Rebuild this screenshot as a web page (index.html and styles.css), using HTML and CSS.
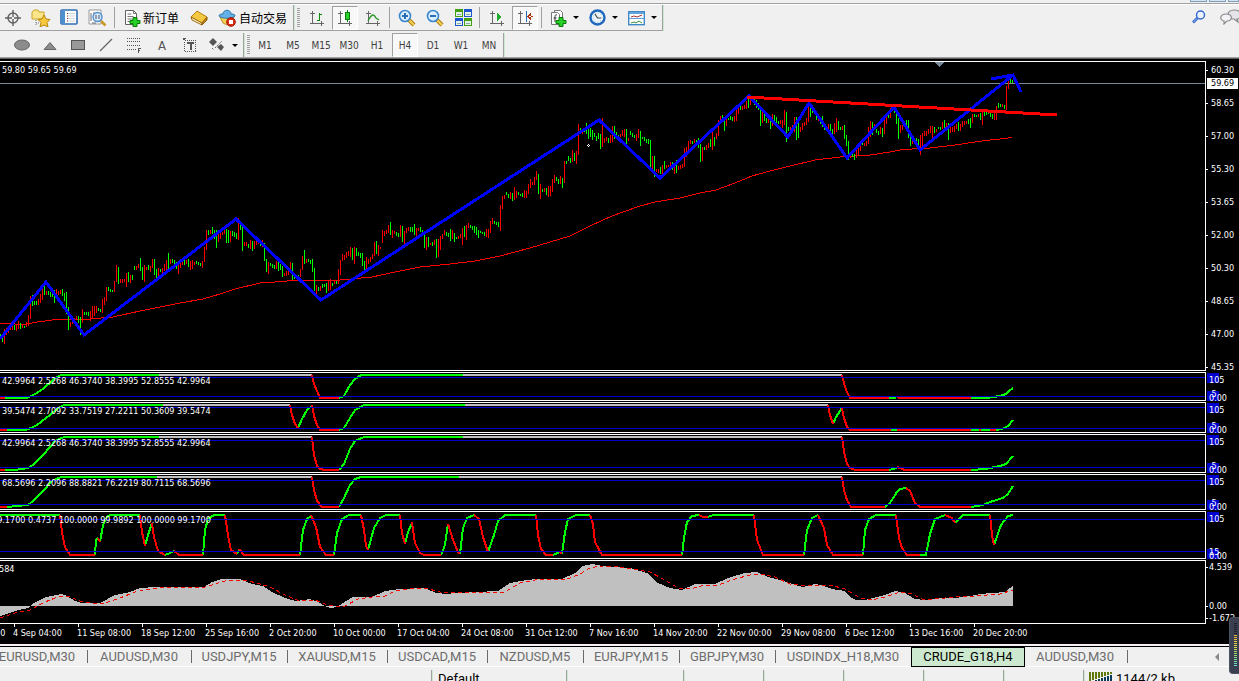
FILE: index.html
```html
<!DOCTYPE html>
<html lang="en">
<head>
<meta charset="utf-8">
<title>CRUDE_G18,H4</title>
<link rel="stylesheet" href="styles.css">
</head>
<body>
<div class="caption"><i class="cap-btn"></i><i class="cap-btn"></i><i class="cap-btn cap-btn--last"></i></div>
<header class="toolbars">
  <div class="bar bar--top">
    <div class="group group--first">
      <button class="tool" aria-label="Crosshair"><svg width="18" height="18" viewBox="0 0 18 18" fill="none" stroke="#606060" stroke-width="1.4"><circle cx="9" cy="9" r="5"/><path d="M9 1v7M9 10v7M1 9h7M10 9h7"/></svg></button>
      <button class="tool" aria-label="Profiles"><svg width="20" height="18" viewBox="0 0 20 18"><path d="M1 3l2-2h4l1 2h5v7H1z" fill="#fbe58a" stroke="#c9a227"/><path d="M5 11v6M5 14h4" stroke="#777" stroke-dasharray="1 1"/><path d="M13 6l2 4 4 .5-3 3 1 4.500-4-2-4 2 1-4.500-3-3 4-.5z" fill="#f7c93c" stroke="#b8860b"/></svg></button>
      <button class="tool" aria-label="Market watch"><svg width="18" height="17" viewBox="0 0 18 17"><rect x="1" y="1" width="16" height="14" rx="1" fill="#fff" stroke="#2c6fb5" stroke-width="1.600"/><rect x="2" y="2" width="3" height="12" fill="#4a90d0"/><path d="M8 4.500h7M8 7h7M8 9.500h7M8 12h7" stroke="#c9d3dd"/><path d="M7 4.500h1M7 7h1M7 9.500h1M7 12h1" stroke="#a33"/></svg></button>
      <button class="tool" aria-label="Data window"><svg width="19" height="18" viewBox="0 0 19 18"><path d="M1 1h12v14H1z" fill="#fff" stroke="#999"/><path d="M3 4v8M6 3v4M4 14h4" stroke="#667"/><circle cx="9.500" cy="8" r="4.500" fill="#cfe6fa" fill-opacity=".85" stroke="#4d8fcc" stroke-width="1.400"/><path d="M8 6v4M11 6v4" stroke="#557"/><path d="M13 12l4.500 4.500" stroke="#c9972b" stroke-width="2.600"/></svg></button>
      <i class="sep"></i>
      <button class="tool tool--text"><svg width="17" height="18" viewBox="0 0 17 18"><path d="M1.500 1.500h8l3 3v11h-11z" fill="#fff" stroke="#606060"/><path d="M9.500 1.500v3h3M3.500 5h4M3.500 7.500h6M3.500 10h5M3.500 12.500h3" stroke="#777" fill="none"/><path d="M9 8.500h4v3h3v3h-3v3H9v-3H6v-3h3z" fill="#27d027" stroke="#087a08"/></svg>新订单</button>
      <button class="tool" aria-label="Meta editor"><svg width="18" height="17" viewBox="0 0 18 17"><path d="M1 8l6-6 10 6-5 6z" fill="#f5c842" stroke="#b77d12"/><path d="M1 8l1 3 10 5v-2z" fill="#fff3c4" stroke="#9b6a10"/><path d="M12 14v2l5-5V8z" fill="#c98a1b" stroke="#8e5d0a"/></svg></button>
      <button class="tool tool--text tool--auto"><svg width="18" height="18" viewBox="0 0 18 18"><path d="M2 8h14l-3 6-4 2-4-2z" fill="#f2cf55" stroke="#b8902a"/><path d="M1 7c0-2 3-2 4-2 0-5 8-5 8 0 2 0 4 0 4 2-3 3-13 3-16 0z" fill="#63b1e6" stroke="#2b77ad"/><circle cx="13" cy="13" r="4.300" fill="#dd2a12" stroke="#a51505"/><rect x="11" y="11" width="4" height="4" fill="#fff"/></svg>自动交易</button>
    </div>
    <div class="group group--chart">
      <i class="grip"></i>
      <button class="tool" aria-label="Bar chart"><svg class="crisp" width="16" height="16" viewBox="0 0 16 16" fill="none"><path d="M3.500 1v12.500H15M1 3.500h5M12.500 11v5M1 13.500h3" stroke="#666"/><path d="M10.500 3v8M11 4.500h2M8 10.500h2" stroke="#0a8a0a"/></svg></button>
      <button class="tool is-on" aria-label="Candlesticks"><svg class="crisp" width="16" height="16" viewBox="0 0 16 16" fill="none"><path d="M3.500 1v12.500H15M1 3.500h5M12.500 11v5M1 13.500h3" stroke="#666"/><path d="M10.500 0v12" stroke="#0a7a0a"/><path d="M8.500 2.500h4v7h-4z" fill="#2ad32a" stroke="#0a7a0a"/></svg></button>
      <button class="tool" aria-label="Line chart"><svg width="16" height="16" viewBox="0 0 16 16" fill="none"><path d="M3.500 1v12.500H15M1 3.500h5M12.500 11v5M1 13.500h3" stroke="#666"/><path d="M3 11c4-8 6-7 8-3l3 2" stroke="#2d9a2d" stroke-width="1.400"/></svg></button>
      <i class="sep"></i>
      <button class="tool" aria-label="Zoom in"><svg width="18" height="18" viewBox="0 0 18 18"><path d="M11 11l5 5" stroke="#a87a10" stroke-width="4"/><path d="M11 11l5 5" stroke="#f4cf52" stroke-width="2.200"/><circle cx="7" cy="7" r="5.500" fill="#d9efff" stroke="#3a86cc" stroke-width="1.600"/><path d="M4 7h6M7 4v6" stroke="#2a6db5" stroke-width="2"/></svg></button>
      <button class="tool" aria-label="Zoom out"><svg width="18" height="18" viewBox="0 0 18 18"><path d="M11 11l5 5" stroke="#a87a10" stroke-width="4"/><path d="M11 11l5 5" stroke="#f4cf52" stroke-width="2.200"/><circle cx="7" cy="7" r="5.500" fill="#d9efff" stroke="#3a86cc" stroke-width="1.600"/><path d="M4 7h6" stroke="#2a6db5" stroke-width="2"/></svg></button>
      <button class="tool" aria-label="Tile windows"><svg class="crisp" width="17" height="17" viewBox="0 0 17 17"><path d="M0 0h8v8H0zM9 9h8v8H9z" fill="#44a012"/><path d="M9 0h8v8H9zM0 9h8v8H0z" fill="#1f56d0"/><path d="M1 3h6v4H1zM10 3h6v4h-6zM1 12h6v4H1zM10 12h6v4h-6z" fill="#e8f2e8"/><path d="M2 5h4M11 5h4M2 14h4M11 14h4" stroke="#8aa" /></svg></button>
      <i class="sep"></i>
      <button class="tool" aria-label="Auto scroll"><svg class="crisp" width="16" height="16" viewBox="0 0 16 16" fill="none"><path d="M3.500 1v12.500H15M1 3.500h5M12.500 11v5M1 13.500h3" stroke="#666"/><path d="M8 3l4 4-4 4z" fill="#1fae2a"/></svg></button>
      <button class="tool is-on" aria-label="Chart shift"><svg class="crisp" width="16" height="16" viewBox="0 0 16 16" fill="none"><path d="M3.500 1v12.500H15M1 3.500h5M12.500 11v5M1 13.500h3" stroke="#666"/><path d="M9.500 1v11" stroke="#2a6db5"/><path d="M14 3l-4 3.500 4 3.500zM12 6h4v1h-4z" fill="#b03010"/></svg></button>
      <i class="sep"></i>
      <button class="tool tool--menu" aria-label="Indicators"><svg width="17" height="18" viewBox="0 0 17 18"><path d="M4.500 1.500h6l2 2v10h-8z" fill="#fff" stroke="#777"/><path d="M1.500 3.500h6l2 2v10h-8z" fill="#fff" stroke="#777"/><path d="M7 6c-2-1-2 1-2 3v4M3.500 9h3" stroke="#333" fill="none"/><path d="M9 8.500h4v3h3v3h-3v3H9v-3H6v-3h3z" fill="#27d027" stroke="#087a08"/></svg><i class="arrow"></i></button>
      <button class="tool tool--menu" aria-label="Periods"><svg width="17" height="17" viewBox="0 0 17 17"><circle cx="8.500" cy="8.500" r="7" fill="#eef6fd" stroke="#1f68bd" stroke-width="2.400"/><circle cx="8.500" cy="8.500" r="4.500" fill="none" stroke="#9bb" stroke-dasharray="1 2"/><path d="M6 5l2.500 4H12" fill="none" stroke="#444" stroke-width="1.200"/></svg><i class="arrow"></i></button>
      <button class="tool tool--menu" aria-label="Templates"><svg width="17" height="16" viewBox="0 0 17 16"><rect x=".7" y="1.700" width="15.600" height="13" fill="#fff" stroke="#3f87c6" stroke-width="1.400"/><path d="M1 3h15" stroke="#5fa3dc" stroke-width="2"/><path d="M1 8.500h15" stroke="#5fa3dc"/><path d="M3 7l3-1 3 1 5-2" fill="none" stroke="#a33"/><path d="M3 13l3-1 2 1 3-2 3 2" fill="none" stroke="#393"/></svg><i class="arrow"></i></button>
    </div>
    <div class="corner">
      <button class="tool" aria-label="Search"><svg width="14" height="14" viewBox="0 0 14 14"><circle cx="8.500" cy="5" r="4" fill="#eef4ff" stroke="#3569cf" stroke-width="1.500"/><path d="M5.500 8L1 12.500" stroke="#3569cf" stroke-width="2.800"/><path d="M5 8.500L1.500 12" stroke="#9cb9f0"/></svg></button>
      <button class="tool" aria-label="Chat"><svg width="22" height="16" viewBox="0 0 22 16" stroke="#8a8a8a" stroke-width="1.200"><path d="M14 1c9 0 9 9 3 9l1 3-4-3c-8 0-8-9 0-9z" fill="#e4e4ea"/><path d="M6 5c7 0 7 7 1 7l-3 3v-3c-5-1-4-7 2-7z" fill="#f3f3f7"/></svg></button>
    </div>
  </div>
  <div class="bar bar--bottom">
    <div class="group group--draw">
      <button class="tool" aria-label="Ellipse"><svg width="18" height="12" viewBox="0 0 18 12"><ellipse cx="9" cy="6" rx="7.500" ry="5" fill="#8c8c8c" stroke="#666"/></svg></button>
      <button class="tool" aria-label="Triangle"><svg width="14" height="9" viewBox="0 0 14 9"><path d="M1 8.500l6-7 6 7z" fill="#8c8c8c" stroke="#666"/></svg></button>
      <button class="tool" aria-label="Rectangle"><svg class="crisp" width="14" height="10" viewBox="0 0 14 10"><path d="M.5.5h13v9H.5z" fill="#999" stroke="#555"/></svg></button>
      <button class="tool" aria-label="Trend line"><svg width="14" height="14" viewBox="0 0 14 14"><path d="M1 13L13 1" stroke="#666" stroke-width="1.200"/></svg></button>
      <button class="tool" aria-label="Fibonacci"><svg class="crisp" width="16" height="18" viewBox="0 0 16 18" fill="none" stroke="#555"><path d="M1 2.500h14M1 5.500h14M1 9.500h14M1 13.500h9" stroke-dasharray="1 1"/><path d="M12.500 17v-5M12 12.500h3M12 14.500h2"/></svg></button>
      <button class="tool tool--letter" aria-label="Text">A</button>
      <button class="tool" aria-label="Text label"><svg class="crisp" width="14" height="15" viewBox="0 0 14 15" fill="none" stroke="#555"><path d="M1.500 2.500h11v11h-11z" stroke-dasharray="1 1"/><path d="M0 .5h3M0 1.500h2"/><path d="M4 5h7M7.500 5v7" stroke-width="2"/></svg></button>
      <button class="tool tool--menu" aria-label="Arrows"><svg width="17" height="14" viewBox="0 0 17 14"><path d="M4 0l4 4-4 4-4-4zM12 6l3 3-3 4-4-4z" fill="#555"/><path d="M6 10l7-7M3 10l2 2" stroke="#666" stroke-dasharray="2 1"/></svg><i class="arrow"></i></button>
    </div>
    <div class="group group--periods">
      <i class="grip"></i>
      <button class="tool">M1</button><button class="tool">M5</button><button class="tool">M15</button><button class="tool">M30</button><button class="tool">H1</button><button class="tool is-on">H4</button><button class="tool">D1</button><button class="tool">W1</button><button class="tool">MN</button>
    </div>
  </div>
</header>

<main class="charts">
  <section class="panel panel--price">
    <div class="plot">
      <svg class="drawing" viewBox="0 62 1205 308" preserveAspectRatio="none">
        <path class="price-line" d="M0 83.500H1205"/>
        <path class="average" d="M0 323L12 323 15 324 27 324 37 322 45 321 60 319 90 319 113 317 140 311 160 307 180 303 203 299 220 294 235 289 260 283 275 282 300 280 340 280 372 277 395 272 420 267 450 264 475 261 500 256 530 248 570 236 590 226 612 216 640 206 655 202 680 198 700 193 716 190 735 183 752 176 770 171 790 166 815 160 840 157 870 155 890 152 900 150 912 149 930 148 955 145 975 142 990 140 1000 139 1008 138 1012 137"/>
        <path class="bar-up" id="bars-up"/>
        <path class="bar-down" id="bars-down"/>
        <path class="zigzag" d="M0 339L46 282 84 335 236 219 321 300 599 120 660 178 749 96 788 137 809 103 847 158 894 107 920 150 1013 75M991 79L1013 75 1021 92"/>
        <path class="trend" d="M747 97L1057 115"/>
        <path class="shift-mark" d="M935 62h9l-4.500 5z"/>
        <path class="pointer" d="M588 144.500h1M587 145.500h1M589 145.500h1M588 146.500h1"/>
      </svg>
      <p class="values">59.80 59.65 59.69</p>
    </div>
    <ol class="scale">
      <li>60.30</li><li>58.65</li><li>57.00</li><li>55.30</li><li>53.65</li><li>52.00</li><li>50.30</li><li>48.65</li><li>47.00</li><li>45.35</li>
    </ol>
    <span class="price-tag">59.69</span>
  </section>

  <section class="panel panel--a">
    <div class="plot">
      <svg class="drawing osc" viewBox="0 373 1205 27" preserveAspectRatio="none">
        <path class="flat" d="M159 375H312M463 375H842"/>
        <path class="rise" d="M5 398H27L31 396 37 393 44 388 52 381 57 377 61 375H159M339 398L344 396 350 385 355 379 361 375H463M889 398H896M971 398H986L1000 396 1006 394 1009 391 1013 388"/>
        <path class="fall" d="M0 398H5M312 375L314 384 317 391 320 398H339M842 375L844 383 846 390 850 398H889M897 397L900 398H971"/>
        <path class="level" d="M0 377.500H1205M0 396.500H1205"/>
      </svg>
      <p class="values">42.9964 2.5268 46.3740 38.3995 52.8555 42.9964</p>
    </div>
    <div class="levels"><span class="lv lv--hi">105</span><span class="lv lv--lo">&nbsp;5</span><span class="lv lv--zero">0.00</span></div>
  </section>

  <section class="panel panel--b">
    <div class="plot">
      <svg class="drawing osc" viewBox="0 403 1205 29" preserveAspectRatio="none">
        <path class="flat" d="M163 405H290M465 405H828"/>
        <path class="rise" d="M7 430H25L31 428 37 425 50 415 58 408 64 405H163M298 428L302 419 307 410 312 406M339 430L344 428 350 418 355 410 364 405H465M833 424L836 417 842 408M891 430H897M971 430H979M981 430H990M996 430L1002 429 1008 426 1013 420"/>
        <path class="fall" d="M0 430H7M290 405L292 415 295 424 298 428M312 405L314 416 317 425 320 430H339M828 405L830 415 833 424M842 408L844 418 847 427 850 430H891M897 430H971M979 430H981M990 430H996"/>
        <path class="level" d="M0 407.500H1205M0 428.500H1205"/>
      </svg>
      <p class="values">39.5474 2.7092 33.7519 27.2211 50.3609 39.5474</p>
    </div>
    <div class="levels"><span class="lv lv--hi">105</span><span class="lv lv--lo">&nbsp;5</span><span class="lv lv--zero">0.00</span></div>
  </section>

  <section class="panel panel--c">
    <div class="plot">
      <svg class="drawing osc" viewBox="0 435 1205 37" preserveAspectRatio="none">
        <path class="flat" d="M159 437H312M463 437H842"/>
        <path class="rise" d="M5 470H15L28 468 33 465 44 454 55 441 64 437H159M339 470L344 464 350 449 355 441 364 437H463M889 470L897 468M971 470L985 469 1000 466 1006 464 1013 456"/>
        <path class="fall" d="M0 470H5M312 437L314 455 317 466 320 469 325 470H339M842 437L844 452 847 464 850 468 855 470H889M897 467L905 470H971"/>
        <path class="level" d="M0 440.500H1205M0 467.500H1205"/>
      </svg>
      <p class="values">42.9964 2.5268 46.3740 38.3995 52.8555 42.9964</p>
    </div>
    <div class="levels"><span class="lv lv--hi">105</span><span class="lv lv--lo">&nbsp;5</span><span class="lv lv--zero">0.00</span></div>
  </section>

  <section class="panel panel--d">
    <div class="plot">
      <svg class="drawing osc" viewBox="0 475 1205 34" preserveAspectRatio="none">
        <path class="flat" d="M157 477H312M459 477H842"/>
        <path class="rise" d="M7 507L17 506 28 505 33 501 44 490 52 481 61 477H157M339 507L344 498 350 485 355 479 361 477H459M885 507L890 503 897 492 900 489 906 488M971 507L983 505 990 502 1003 498 1008 494 1013 486"/>
        <path class="fall" d="M0 507H7M312 477L314 490 317 501 322 507H339M842 477L844 490 847 500 851 507H885M906 488L910 491 915 503 920 507H971"/>
        <path class="level" d="M0 480.500H1205M0 504.500H1205"/>
      </svg>
      <p class="values">68.5696 2.2096 88.8821 76.2219 80.7115 68.5696</p>
    </div>
    <div class="levels"><span class="lv lv--hi">105</span><span class="lv lv--lo">&nbsp;5</span><span class="lv lv--zero">0.00</span></div>
  </section>

  <section class="panel panel--e">
    <div class="plot">
      <svg class="drawing osc" viewBox="0 512 1205 46" preserveAspectRatio="none">
        <path class="rise" d="M0 515H60M95 555L96 540 98 538M100 542L103 525 107 517 110 515H140M145 546L148 535 152 523M165 555L170 553 174 551M203 555L205 530 208 519 214 515H225M237 554L239 550M300 555L303 530 307 519 311 516M334 555L337 533 342 519 349 515H361M368 550L374 528 380 518 386 515H400M405 544L408 532 412 523M441 555L445 545 448 524M460 554L463 528 467 518 474 515M488 552L494 535 498 521 505 515H536M553 555L560 552M562 554L565 532 568 519 576 515H590M682 555L684 538 687 522 692 516 699 515M708 517L713 515H754M804 555L807 530 812 518 818 515M863 555L865 530 869 519 876 515H896M920 555H926L930 534 935 519 945 515M955 523L963 515H990M994 545L1001 525 1008 516 1013 515"/>
        <path class="fall" d="M60 515L62 532 65 547 70 555H95M98 538L100 542M140 515L142 532 145 546M152 523L154 537 158 551 165 555M174 551L179 555H203M225 515L228 535 231 550 237 554M239 549L244 555H300M311 515L316 527 320 547 326 555H334M361 515L364 530 366 546 368 550M400 515L402 533 405 544M412 522L415 543 420 553 424 555H441M448 524L453 540 458 552 460 554M474 515L479 519 483 537 488 552M536 515L538 535 541 549 546 555H553M560 552L562 554M590 515L593 524 595 542 602 555H682M699 515L703 517H708M754 515L757 540 763 555H804M818 515L824 528 827 545 833 555H863M896 515L899 538 902 548 907 555H920M945 515L952 518 955 523M990 515L992 535 994 545"/>
        <path class="level" d="M0 519.500H1205M0 551.500H1205"/>
      </svg>
      <p class="values values--cut">99.1700 0.4737 100.0000 99.9892 100.0000 99.1700</p>
    </div>
    <div class="levels"><span class="lv lv--hi">105</span><span class="lv lv--lo">15</span><span class="lv lv--zero">0.00</span></div>
  </section>

  <section class="panel panel--macd">
    <div class="plot">
      <svg class="drawing" viewBox="0 561 1205 62" preserveAspectRatio="none">
        <path class="histogram" d="M0 606V616L15 611 28 608 32 604 46 597 62 594 67 596 75 601 82 603H100L115 595 130 592 140 588 155 587H204L212 582 222 579H240L252 584 263 586 272 592 285 598 296 601 310 599 318 602 325 606 330 608 337 607 343 603 353 597H372L385 591 400 589 420 588 427 589 436 593 447 594 455 593 498 591 510 583 520 581 536 579H562L575 573 583 566 592 564 602 566 630 568 647 573 658 583 670 588 682 590 695 584H715L728 578 745 573 757 572 768 577 780 580 795 585 803 587 815 584 820 585 832 589 845 591 850 597 856 600H865L873 598 885 595 895 591 905 593 915 599 925 600 940 598H955L970 596 980 594 1005 592 1010 588 1013 586V606z"/>
        <path class="signal" d="M0 618L15 613 30 610 45 602 60 596 68 596 80 601 90 603 105 603 120 598 135 592 150 589 170 587 205 587 215 584 225 581 245 580 260 584 270 587 283 594 297 600 315 600 325 604 333 606 345 606 358 599 372 597 385 596 395 591 410 589 425 588 440 592 470 593 505 592 520 583 540 579 565 580 580 574 590 568 600 566 620 567 650 572 665 580 678 588 690 589 705 585 718 585 735 579 750 575 760 574 775 577 790 584 810 586 830 585 845 589 860 598 872 600 885 597 900 592 912 594 922 599 935 599 955 597 975 596 1000 594 1013 590"/>
      </svg>
      <p class="values values--short">584</p>
    </div>
    <ol class="scale scale--macd"><li>4.539</li><li>0.00</li><li>-1.672</li></ol>
  </section>

  <ol class="dates">
    <li class="date--cut">00</li><li>4 Sep 04:00</li><li>11 Sep 08:00</li><li>18 Sep 12:00</li><li>25 Sep 16:00</li><li>2 Oct 20:00</li><li>10 Oct 00:00</li><li>17 Oct 04:00</li><li>24 Oct 08:00</li><li>31 Oct 12:00</li><li>7 Nov 16:00</li><li>14 Nov 20:00</li><li>22 Nov 00:00</li><li>29 Nov 08:00</li><li>6 Dec 12:00</li><li>13 Dec 16:00</li><li>20 Dec 20:00</li>
  </ol>
</main>

<nav class="tabs">
  <button class="tab tab--s tab--cut">EURUSD,M30</button><button class="tab tab--m">AUDUSD,M30</button><button class="tab tab--xs">USDJPY,M15</button><button class="tab tab--s">XAUUSD,M15</button><button class="tab tab--s">USDCAD,M15</button><button class="tab tab--xs">NZDUSD,M5</button><button class="tab tab--xs">EURJPY,M15</button><button class="tab tab--xs">GBPJPY,M30</button><button class="tab tab--l">USDINDX_H18,M30</button><button class="tab tab--active">CRUDE_G18,H4</button><button class="tab tab--m">AUDUSD,M30</button>
  <button class="tab-scroll" aria-label="Scroll tabs left"><svg width="5" height="8" viewBox="0 0 5 8"><path d="M5 0v8L1 4z" fill="#888"/></svg></button>
</nav>
<footer class="status">
  <span class="cell cell--help"></span><span class="cell cell--profile">Default</span><span class="cell cell--wide"></span><span class="cell"></span><span class="cell"></span><span class="cell"></span><span class="cell"></span><span class="cell"></span>
  <span class="cell cell--net"><svg class="crisp" width="23" height="14" viewBox="0 0 23 14" stroke-width="2"><path d="M1 0v9M4 0v8M7 0v7M10 0v6M13 0v5M16 0v4M19 0v3M22 0v2" stroke="#5f7a0a"/><path d="M1 10v4M4 9v5M7 8v6M10 7v7M13 6v8M16 5v9M19 4v10M22 3v11" stroke="#0c3a5a"/></svg>1144/2 kb</span>
</footer>
<aside class="meter"><i class="meter-bars"></i></aside>
<script src="chart.js"></script>
</body>
</html>
```

FILE: styles.css
```css
* { box-sizing: border-box; }

body {
  margin: 0;
  height: 100vh;
  display: flex;
  flex-direction: column;
  overflow: hidden;
  position: relative;
  background: #f0f0f0;
  color: #000;
  font-family: "DejaVu Sans Condensed", "DejaVu Sans", "Noto Sans CJK SC", sans-serif;
  font-size: 10px;
}

button { font: inherit; color: inherit; background: none; border: 0; padding: 0; }
svg { display: block; flex: none; }
ol { list-style: none; margin: 0; padding: 0; }
p { margin: 0; }
.crisp { shape-rendering: crispEdges; }

/* window caption remainder */
.caption {
  flex: none;
  display: flex;
  justify-content: flex-end;
  gap: 2px;
  height: 5px;
  border-bottom: 1px solid #fff;
  box-shadow: inset 0 -1px #a0a0a0;
}
.cap-btn { width: 17px; height: 2px; background: #d5e4f1; border: 1px solid #7f9db9; border-top: 0; }
.cap-btn--last { width: 11px; }

/* toolbars */
.toolbars { flex: none; border-bottom: 1px solid #606060; box-shadow: inset 0 -1px #a0a0a0; padding-bottom: 1px; }
.bar { display: flex; height: 26px; }
.bar--bottom { padding-top: 2px; }
.group { display: flex; align-items: center; border-right: 1px solid #a0a0a0; box-shadow: 1px 0 #cce8cf; }
.bar--top .group { border-bottom: 1px solid #a0a0a0; }
.group--first .tool:first-child { margin-left: -1px; }
.group--draw { padding-left: 8px; }
.group--periods { color: #404040; }
.tool { display: flex; align-items: center; justify-content: center; width: 28px; height: 24px; white-space: nowrap; }
.tool.is-on { width: 26px; margin: 0 1px; background: #f8f8f8; border: 1px solid #a0a0a0; border-right-color: #fff; border-bottom-color: #fff; }
.tool--text { width: auto; padding: 0 6px; gap: 2px; font-family: "Noto Sans CJK SC", sans-serif; font-size: 12px; line-height: 16px; }
.tool--auto { gap: 3px; padding-left: 5px; }
.tool--menu { width: 39px; gap: 6px; }
.tool--letter { font-size: 13px; color: #555; }
.arrow { width: 0; height: 0; border: 3px solid transparent; border-top-color: #000; border-bottom: 0; }
.sep { width: 1px; height: 21px; margin: 0 3px; background: #a0a0a0; }
.group--chart .sep { margin-left: 2px; }
.grip { width: 3px; height: 20px; margin: 0 3px; background: repeating-linear-gradient(#a0a0a0 0 1px, #f0f0f0 1px 2px); }
.group--periods .grip { margin-right: 1px; }
.corner { display: flex; gap: 4px; margin: 0 -6px 0 auto; }

/* charts */
.charts {
  flex: 1;
  min-height: 0;
  display: flex;
  flex-direction: column;
  gap: 1px;
  padding-top: 2px;
  background: #000;
  color: #fff;
  font-size: 9px;
  line-height: 12px;
}
.panel { position: relative; flex: none; display: grid; grid-template-columns: 1fr 33px; }
.panel--price { flex: 1; min-height: 0; }
.panel--a { height: 29px; }
.panel--b { height: 31px; }
.panel--c { height: 39px; }
.panel--d { height: 36px; }
.panel--e { height: 48px; }
.panel--macd { height: 64px; }
.plot { position: relative; min-height: 0; overflow: hidden; border: 1px solid #fff; border-left: 0; }
.drawing { width: 100%; height: 100%; shape-rendering: crispEdges; fill: none; }
.values { position: absolute; top: 2px; left: 2px; white-space: nowrap; }
.values--cut { left: -8px; }
.values--short { left: -1px; }

.price-line { stroke: #778899; }
.average { stroke: #f00; }
.bar-up { stroke: #f00; }
.bar-down { stroke: #0f0; }
.zigzag { stroke: #00f; stroke-width: 3; }
.trend { stroke: #f00; stroke-width: 3; }
.shift-mark { fill: #778899; }
.pointer { stroke: #fff; }
.osc { stroke-width: 2; }
.flat { stroke: #c0c0c0; }
.rise { stroke: #0f0; }
.fall { stroke: #f00; }
.level { stroke: #0000cd; stroke-width: 1; }
.histogram { fill: #c0c0c0; }
.signal { stroke: #f00; stroke-dasharray: 4 3; }

.scale { display: flex; flex-direction: column; gap: 21px; padding-top: 3px; height: 0; }
.scale li { display: flex; align-items: center; gap: 3px; white-space: nowrap; }
.scale li::before { content: ""; width: 2px; height: 1px; background: #fff; }
.scale--macd { height: 100%; gap: 0; padding: 1px 0 0; overflow: hidden; }
.scale--macd li { gap: 1px; }
.scale--macd li:first-child { margin-bottom: auto; }
.price-tag { position: absolute; right: 1px; top: 17px; width: 31px; padding-left: 4px; line-height: 11px; background: #fff; color: #000; }

.levels { position: relative; overflow: hidden; }
.lv { position: absolute; left: 3px; z-index: 1; }
.lv--hi { top: 2px; }
.lv--lo { bottom: 1px; }
.lv--zero { bottom: -3px; }
.levels::before, .levels::after { content: ""; position: absolute; left: 1px; width: 12px; height: 10px; background: #0000cd; }
.levels::before { top: 1px; }
.levels::after { bottom: 0; }

.dates { flex: none; display: flex; height: 20px; margin-top: -1px; overflow: hidden; }
.dates li { position: relative; flex: none; width: 64px; padding-top: 3px; text-indent: -1px; white-space: nowrap; }
.dates li::before { content: ""; position: absolute; left: 0; top: 0; width: 1px; height: 3px; background: #fff; }
.dates .date--cut { width: 14px; text-indent: -5px; }
.dates .date--cut::before { display: none; }

/* chart tabs */
.tabs {
  flex: none;
  display: flex;
  height: 23px;
  padding-top: 2px;
  border-top: 2px solid #f4eef4;
  border-bottom: 1px solid #fff;
  background: linear-gradient(#000 0 1px, #f0f0f0 1px);
  font-family: Roboto, "Noto Sans", sans-serif;
  font-size: 13px;
  line-height: 18px;
  color: #6d6d6d;
}
.tab { position: relative; flex: none; height: 18px; padding-right: 2px; text-align: center; white-space: nowrap; }
.tab::after { content: ""; position: absolute; right: 0; top: 2px; width: 1px; height: 13px; background: #696969; }
.tab--xs { width: 96px; }
.tab--s { width: 100px; }
.tab--m { width: 104px; }
.tab--l { width: 136px; }
.tab--cut { margin-left: -12px; }
.tab--l::after, .tab--active::after { display: none; }
.tab--active { width: 112px; padding-right: 0; background: #cce8cf; color: #000; box-shadow: 0 0 0 1px #000; }
.tab-scroll { display: flex; align-items: center; margin: 0 20px 0 auto; }

/* status bar */
.status {
  flex: none;
  display: flex;
  height: 14px;
  padding-top: 3px;
  overflow: hidden;
  font-family: Roboto, "Noto Sans", sans-serif;
  font-size: 13px;
  line-height: 18px;
}
.cell { flex: none; width: 80px; height: 11px; border-right: 1px solid #a0a0a0; box-shadow: 1px 0 #cce8cf; white-space: nowrap; }
.cell--help { flex: 1; }
.cell--profile { width: 135px; padding-left: 6px; }
.cell--wide { width: 117px; }
.cell--net { display: flex; width: 155px; padding: 2px 0 0 5px; gap: 4px; border: 0; line-height: 14px; }

/* floating resource meter */
.meter { position: absolute; right: 0; bottom: 7px; width: 10px; height: 57px; padding: 5px 2px 6px 4px; border: 1px solid #4a5264; border-right: 0; border-radius: 4px 0 0 4px; background: #3a4050; }
.meter-bars {
  display: block;
  height: 100%;
  background:
    repeating-linear-gradient(transparent 0 1px, #3a4050 1px 2px),
    linear-gradient(#1c202a 0 24%, #e8a83c 26%, #e6d84a 50%, #8fdc7a 75%, #5fd8e0);
}
```

FILE: chart.js
```js
// Price bars, one every two pixels: direction (r up, g down), high and low.
const BARS = `
g334-339 g335-342 r329-344 r328-335 r327-333 r326-330 r325-330 g325-330 r325-331 r321-329
g323-329 r324-328 g326-328 r322-327 r315-326 r296-319 g295-306 g301-305 g301-305 r299-305
r294-303 r287-300 g283-295 r291-295 g291-295 g292-297 g291-297 g290-303 r289-298 r291-295
r290-294 g289-296 g293-301 g292-314 g307-330 r322-327 r320-324 r318-322 r316-320 g316-323
g317-335 r309-323 g312-315 g312-315 g312-316 r311-321 r306-318 r306-316 r306-313 g308-311
g309-312 r299-313 r297-305 r287-301 g287-291 g289-292 g290-292 r281-292 r265-282 g267-284
r279-283 r279-283 r279-282 r273-287 g272-282 r275-283 g275-280 g266-270 r266-270 r264-268
g258-271 g267-280 r265-282 r267-270 g265-270 r266-272 r259-268 g259-275 g269-279 r268-277
g269-272 r268-274 r264-271 r260-270 g253-270 r259-264 g259-263 g260-267 g262-269 r264-274
r263-268 r261-265 g260-265 r260-264 g259-267 r261-270 r260-269 r262-265 g261-264 g262-265
g263-266 r261-268 r247-262 r230-250 g230-235 r230-234 g227-234 g230-239 g230-248 r233-242
r232-239 r232-235 r229-234 g229-243 g230-243 r231-242 g231-236 g232-237 g233-239 r218-240
g223-230 g225-251 r242-246 r242-246 g244-248 r240-249 g241-251 r241-249 r240-245 r242-244
g242-246 r240-247 g243-261 g259-272 r262-274 g263-266 g264-268 g265-269 r261-269 g260-271
g264-270 g266-277 r273-276 r271-276 r268-275 r262-273 g263-280 g277-279 r275-278 g275-277
r269-277 r256-270 g250-264 r259-263 g259-262 g260-264 g259-272 g268-291 r285-294 g287-291
r286-291 g284-288 g284-287 g283-293 r280-291 r279-290 g283-286 r281-284 g281-284 r269-284
r260-275 r254-261 r255-260 r252-258 r251-256 r247-257 g248-260 r247-264 g248-256 g252-256
g253-258 g253-266 g261-271 r257-269 r259-264 r257-262 r254-259 r242-256 g241-254 r245-256
r247-249 r230-243 r231-236 r230-234 r225-233 g222-235 r230-238 r231-234 g232-236 g233-237
r225-237 g226-242 r231-244 r228-233 r227-231 g227-232 g227-232 g224-235 r228-236 r228-231
g227-232 g230-236 g234-248 r237-250 g237-247 r243-245 g242-246 r240-245 g239-258 r239-257
r236-250 r234-239 r230-235 g232-236 g233-237 g229-241 r230-239 g233-242 g237-239 r236-239
r234-238 r228-245 g226-237 r225-240 r223-228 g225-228 g226-230 g226-233 g227-235 g230-238
g231-233 g232-234 g232-236 r229-237 r229-238 r221-233 r218-224 g221-224 g222-225 g222-227
r205-231 r196-209 r195-199 g192-195 g194-198 r192-199 g193-201 r187-200 r191-198 g192-195
g194-196 g193-197 r190-198 r191-198 r184-194 r179-188 r182-185 r177-185 r171-180 g174-194
r184-199 g189-192 r188-192 g188-195 r186-197 r186-196 r179-192 r175-183 g177-181 g179-184
r176-184 g178-188 r161-183 g161-164 g156-161 g158-163 r150-162 g153-161 r151-164 r124-155
g128-132 r129-134 g129-132 g123-134 g127-139 g128-137 g130-140 g133-137 g136-141 g133-139
g134-149 r118-147 r138-143 r137-141 g138-143 r135-143 r126-142 g126-139 g132-137 g135-137
r134-137 r130-136 r129-137 g129-144 r138-141 g131-135 g133-137 g135-138 r134-141 r129-138
g131-146 g137-139 g137-141 g139-143 g139-144 g140-167 r156-169 g156-177 r169-172 r169-173
g167-174 r165-174 g161-169 r165-168 r165-167 r162-167 g162-170 r167-174 g160-173 r166-170
r165-169 r164-168 r148-167 r147-157 r141-152 r140-144 g141-144 r139-143 g140-143 g138-148
g144-162 r147-161 g147-150 r145-150 r143-148 g139-147 r132-150 g137-146 r133-139 r120-136
r116-124 g115-122 g121-131 r119-126 g118-120 g116-120 g117-121 r116-122 r108-121 r107-114
g106-110 r106-110 r105-109 r101-109 g96-108 r99-105 r98-100 g97-105 g100-108 g103-110
g110-126 r112-123 g114-121 g118-123 r118-123 g116-129 r114-126 g115-123 g117-123 g121-124
r120-124 r120-128 r110-125 g112-142 g127-131 r127-133 r125-132 r117-132 g117-140 g118-138
r127-132 r123-130 r122-126 r118-125 r102-122 g106-117 g110-113 g112-114 g113-120 r119-121
g119-124 g116-127 g124-130 r126-130 r124-129 g124-133 g129-134 r123-134 r118-132 g121-130
g127-130 r126-130 g125-139 g135-146 g141-160 r155-158 g153-157 g154-160 r148-158 r147-156
r143-151 g141-145 r143-146 r141-146 r127-144 r121-137 g122-135 r124-130 g129-133 g131-135
r127-134 g128-137 r119-134 r116-124 g114-118 r108-118 r107-111 g108-113 g112-124 g118-139
r125-133 r125-130 g121-127 g120-130 g120-138 g136-146 r140-144 r140-144 g138-145 g139-147
r135-155 r133-148 r131-136 r131-136 r129-134 r126-133 r126-138 g127-133 r129-132 g127-129
g127-130 r122-129 g120-128 r123-131 g123-140 r127-133 r127-132 r126-132 r124-129 g122-131
r124-131 r121-127 r121-125 r121-124 g119-124 g118-128 r114-123 g114-117 g115-117 r114-117
g113-120 r112-125 g111-116 g112-115 g111-114 g112-117 g114-119 r112-120 r106-120 g103-108
g104-107 r104-107 g105-109 r86-110 r78-89 g78-83 g80-83`;

const paths = { r: "", g: "" };
BARS.trim().split(/\s+/).forEach((bar, i) => {
  const [high, low] = bar.slice(1).split("-");
  paths[bar[0]] += `M${i * 2 + 0.5} ${high}V${low}`;
});
document.getElementById("bars-up").setAttribute("d", paths.r);
document.getElementById("bars-down").setAttribute("d", paths.g);
```
